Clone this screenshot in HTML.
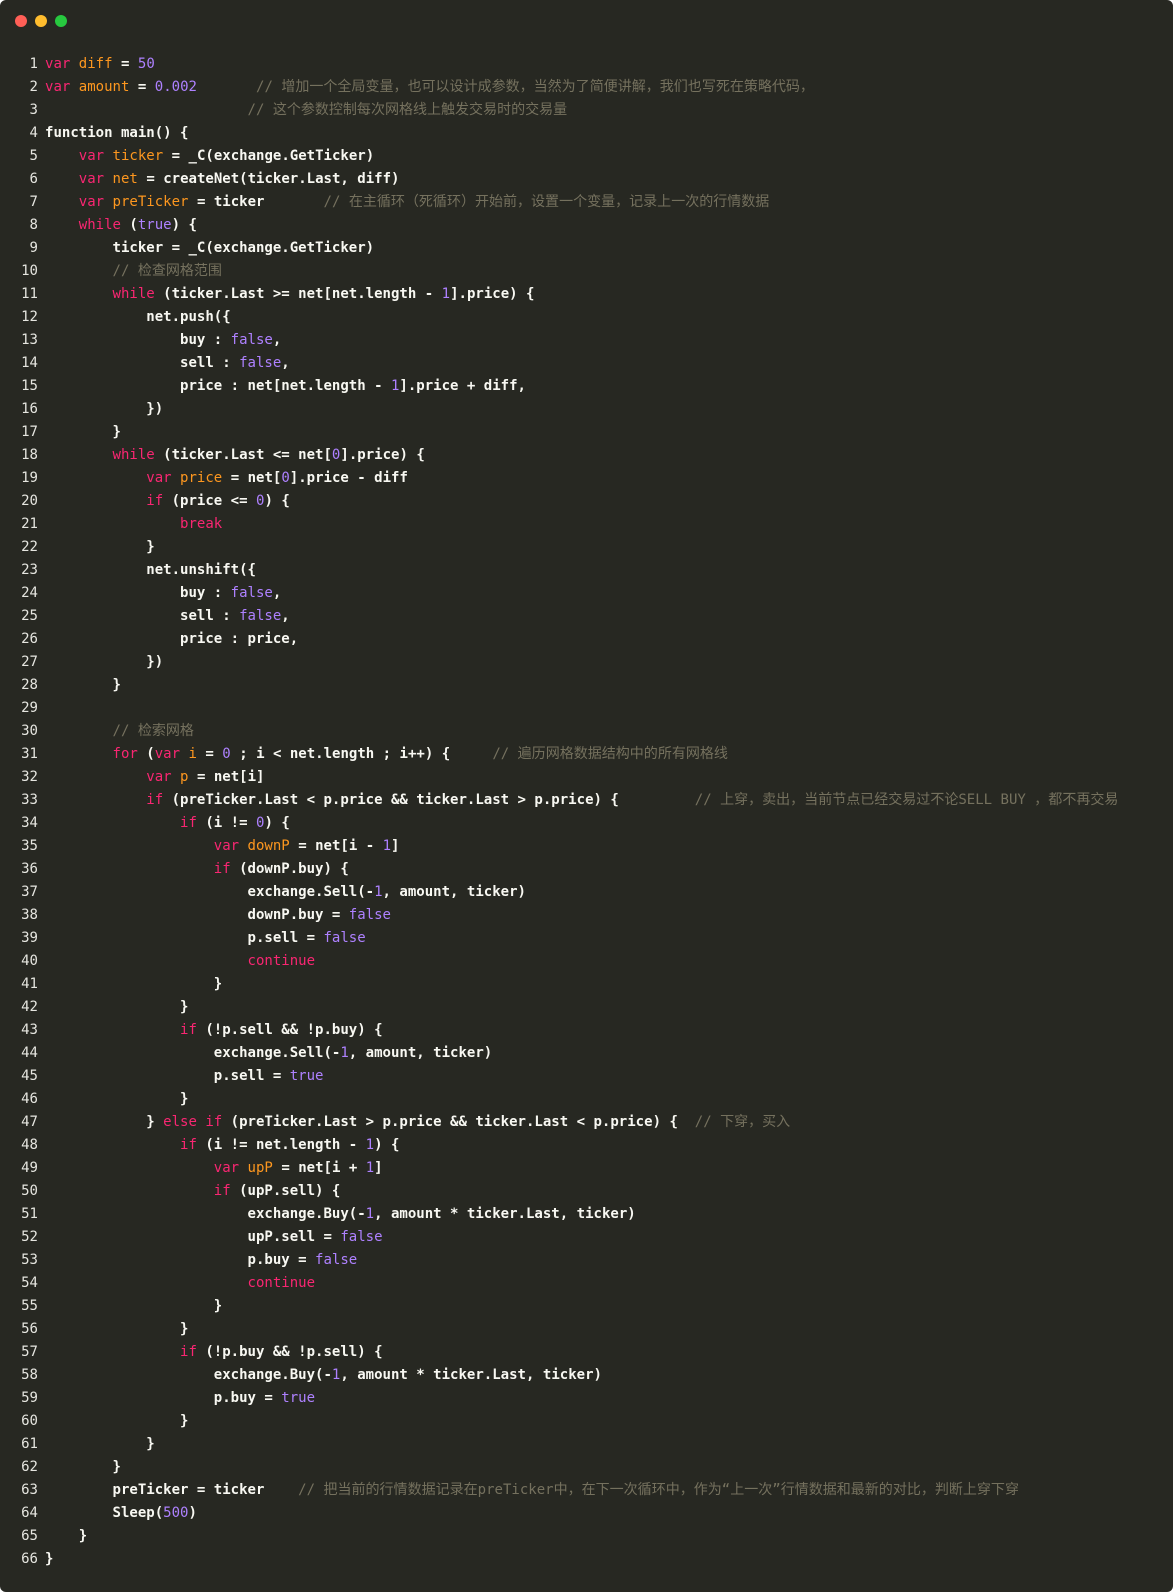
<!DOCTYPE html>
<html><head><meta charset="utf-8"><style>
html,body{margin:0;padding:0;background:#fff;}
.win{position:absolute;left:0;top:0;width:1173px;height:1592px;background:#272822;border-radius:6px;overflow:hidden;}
.dot{position:absolute;top:15px;width:12px;height:12px;border-radius:50%;}
pre{position:absolute;left:1px;top:53px;margin:0;font-family:"DejaVu Sans Mono","Liberation Mono","Noto Sans CJK SC",monospace;font-size:14.03px;line-height:23px;color:#f8f8f2;font-weight:bold;}
.n{display:inline-block;width:37px;text-align:right;margin-right:7px;color:#e6e6e0;font-weight:normal;}
.k{color:#f92672;font-weight:normal;}
.o{color:#fd971f;font-weight:normal;}
.p{color:#ae81ff;font-weight:normal;}
.c{color:#75715e;font-weight:normal;font-family:"DejaVu Sans Mono","Noto Sans CJK SC",monospace;}
</style></head><body><div class="win">
<div class="dot" style="left:15px;background:#ff5f56"></div>
<div class="dot" style="left:35px;background:#ffbd2e"></div>
<div class="dot" style="left:55px;background:#27c93f"></div>
<pre><span class="n">1</span><span class="k">var</span> <span class="o">diff</span> = <span class="p">50</span>
<span class="n">2</span><span class="k">var</span> <span class="o">amount</span> = <span class="p">0.002</span>       <span class="c">// 增加一个全局变量，也可以设计成参数，当然为了简便讲解，我们也写死在策略代码，</span>
<span class="n">3</span>                        <span class="c">// 这个参数控制每次网格线上触发交易时的交易量</span>
<span class="n">4</span>function main() {
<span class="n">5</span>    <span class="k">var</span> <span class="o">ticker</span> = _C(exchange.GetTicker)
<span class="n">6</span>    <span class="k">var</span> <span class="o">net</span> = createNet(ticker.Last, diff)
<span class="n">7</span>    <span class="k">var</span> <span class="o">preTicker</span> = ticker       <span class="c">// 在主循环（死循环）开始前，设置一个变量，记录上一次的行情数据</span>
<span class="n">8</span>    <span class="k">while</span> (<span class="p">true</span>) {
<span class="n">9</span>        ticker = _C(exchange.GetTicker)
<span class="n">10</span>        <span class="c">// 检查网格范围</span>
<span class="n">11</span>        <span class="k">while</span> (ticker.Last &gt;= net[net.length - <span class="p">1</span>].price) {
<span class="n">12</span>            net.push({
<span class="n">13</span>                buy : <span class="p">false</span>,
<span class="n">14</span>                sell : <span class="p">false</span>,
<span class="n">15</span>                price : net[net.length - <span class="p">1</span>].price + diff,
<span class="n">16</span>            })
<span class="n">17</span>        }
<span class="n">18</span>        <span class="k">while</span> (ticker.Last &lt;= net[<span class="p">0</span>].price) {
<span class="n">19</span>            <span class="k">var</span> <span class="o">price</span> = net[<span class="p">0</span>].price - diff
<span class="n">20</span>            <span class="k">if</span> (price &lt;= <span class="p">0</span>) {
<span class="n">21</span>                <span class="k">break</span>
<span class="n">22</span>            }
<span class="n">23</span>            net.unshift({
<span class="n">24</span>                buy : <span class="p">false</span>,
<span class="n">25</span>                sell : <span class="p">false</span>,
<span class="n">26</span>                price : price,
<span class="n">27</span>            })
<span class="n">28</span>        }
<span class="n">29</span>
<span class="n">30</span>        <span class="c">// 检索网格</span>
<span class="n">31</span>        <span class="k">for</span> (<span class="k">var</span> <span class="o">i</span> = <span class="p">0</span> ; i &lt; net.length ; i++) {     <span class="c">// 遍历网格数据结构中的所有网格线</span>
<span class="n">32</span>            <span class="k">var</span> <span class="o">p</span> = net[i]
<span class="n">33</span>            <span class="k">if</span> (preTicker.Last &lt; p.price &amp;&amp; ticker.Last &gt; p.price) {         <span class="c">// 上穿，卖出，当前节点已经交易过不论SELL BUY ，都不再交易</span>
<span class="n">34</span>                <span class="k">if</span> (i != <span class="p">0</span>) {
<span class="n">35</span>                    <span class="k">var</span> <span class="o">downP</span> = net[i - <span class="p">1</span>]
<span class="n">36</span>                    <span class="k">if</span> (downP.buy) {
<span class="n">37</span>                        exchange.Sell(-<span class="p">1</span>, amount, ticker)
<span class="n">38</span>                        downP.buy = <span class="p">false</span>
<span class="n">39</span>                        p.sell = <span class="p">false</span>
<span class="n">40</span>                        <span class="k">continue</span>
<span class="n">41</span>                    }
<span class="n">42</span>                }
<span class="n">43</span>                <span class="k">if</span> (!p.sell &amp;&amp; !p.buy) {
<span class="n">44</span>                    exchange.Sell(-<span class="p">1</span>, amount, ticker)
<span class="n">45</span>                    p.sell = <span class="p">true</span>
<span class="n">46</span>                }
<span class="n">47</span>            } <span class="k">else if</span> (preTicker.Last &gt; p.price &amp;&amp; ticker.Last &lt; p.price) {  <span class="c">// 下穿，买入</span>
<span class="n">48</span>                <span class="k">if</span> (i != net.length - <span class="p">1</span>) {
<span class="n">49</span>                    <span class="k">var</span> <span class="o">upP</span> = net[i + <span class="p">1</span>]
<span class="n">50</span>                    <span class="k">if</span> (upP.sell) {
<span class="n">51</span>                        exchange.Buy(-<span class="p">1</span>, amount * ticker.Last, ticker)
<span class="n">52</span>                        upP.sell = <span class="p">false</span>
<span class="n">53</span>                        p.buy = <span class="p">false</span>
<span class="n">54</span>                        <span class="k">continue</span>
<span class="n">55</span>                    }
<span class="n">56</span>                }
<span class="n">57</span>                <span class="k">if</span> (!p.buy &amp;&amp; !p.sell) {
<span class="n">58</span>                    exchange.Buy(-<span class="p">1</span>, amount * ticker.Last, ticker)
<span class="n">59</span>                    p.buy = <span class="p">true</span>
<span class="n">60</span>                }
<span class="n">61</span>            }
<span class="n">62</span>        }
<span class="n">63</span>        preTicker = ticker    <span class="c">// 把当前的行情数据记录在preTicker中，在下一次循环中，作为“上一次”行情数据和最新的对比，判断上穿下穿</span>
<span class="n">64</span>        Sleep(<span class="p">500</span>)
<span class="n">65</span>    }
<span class="n">66</span>}</pre>
</div></body></html>
